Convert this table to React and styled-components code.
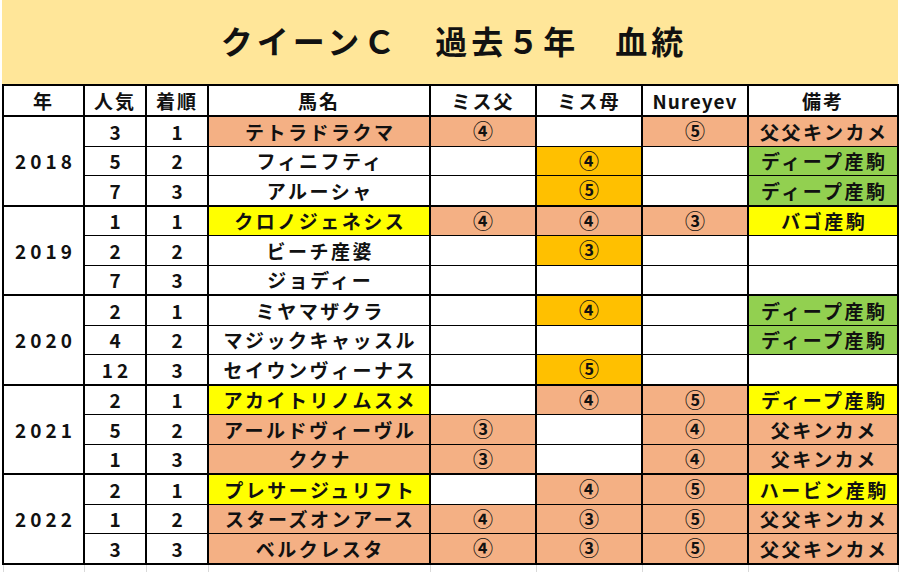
import React from "react";
import styled, { createGlobalStyle } from "styled-components";

const GlobalStyle = createGlobalStyle`
  html, body { margin: 0; padding: 0; background: #ffffff; }
  body { font-family: "Noto Sans CJK JP", "Noto Sans", sans-serif; }
`;

const FILLS = {
  white: "#ffffff",
  salmon: "#F4B084",
  orange: "#FFC000",
  green: "#92D050",
  yellow: "#FFFF00",
};

const Sheet = styled.div`
  width: 902px;
  height: 572px;
  overflow: hidden;
  box-sizing: border-box;
  padding: 0 2px 0 2px;
  background: #ffffff;
`;

const TitleBand = styled.div`
  height: 84px;
  width: 896px;
  background: #FFE699;
  display: flex;
  align-items: center;
  justify-content: center;
  font-size: 32px;
  font-weight: 700;
  letter-spacing: 4px;
  color: #111;
  padding: 0 0 5px 8px;
  box-sizing: border-box;
`;

const Table = styled.table`
  border-collapse: collapse;
  table-layout: fixed;
  width: 897px;
  color: #111;
  font-weight: 700;
  font-size: 19px;
`;

const HeadCell = styled.th`
  height: 29px;
  padding: 0;
  border: 2px solid #000;
  background: #ffffff;
  text-align: center;
  font-weight: 700;
  letter-spacing: ${(p) => (p.$latin ? "1px" : "2px")};
  line-height: 1;
`;

const Cell = styled.td`
  height: 28.5px;
  padding: 0;
  text-align: center;
  vertical-align: middle;
  line-height: 1;
  white-space: nowrap;
  background: ${(p) => FILLS[p.$fill || "white"]};
  border-left: 2px solid #000;
  border-right: 2px solid #000;
  border-top: ${(p) => (p.$groupTop ? "2px" : "1px")} solid #000;
  border-bottom: ${(p) => (p.$groupEnd ? "2px" : "1px")} solid #000;
  letter-spacing: ${(p) => (p.$digits ? "4px" : "2.5px")};
  padding-left: ${(p) => (p.$digits ? "4px" : "2.5px")};
  font-size: ${(p) => (p.$mark ? "20px" : "19px")};
`;

const GridRow = styled.tr`
  height: 8px;
`;

const GridCell = styled.td`
  padding: 0;
  border-left: 1px solid #d9d9d9;
  border-right: 1px solid #d9d9d9;
`;

const COLS = [81, 62, 62, 222, 106, 106, 106, 150];
const HEADERS = ["年", "人気", "着順", "馬名", "ミス父", "ミス母", "Nureyev", "備考"];

const S = "salmon", W = "white", O = "orange", G = "green", Y = "yellow";

const GROUPS = [
  {
    year: "2018",
    rows: [
      ["3", "1", ["テトラドラクマ", S], ["④", S], ["", W], ["⑤", S], ["父父キンカメ", S]],
      ["5", "2", ["フィニフティ", W], ["", W], ["④", O], ["", W], ["ディープ産駒", G]],
      ["7", "3", ["アルーシャ", W], ["", W], ["⑤", O], ["", W], ["ディープ産駒", G]],
    ],
  },
  {
    year: "2019",
    rows: [
      ["1", "1", ["クロノジェネシス", Y], ["④", S], ["④", S], ["③", S], ["バゴ産駒", Y]],
      ["2", "2", ["ビーチ産婆", W], ["", W], ["③", O], ["", W], ["", W]],
      ["7", "3", ["ジョディー", W], ["", W], ["", W], ["", W], ["", W]],
    ],
  },
  {
    year: "2020",
    rows: [
      ["2", "1", ["ミヤマザクラ", W], ["", W], ["④", O], ["", W], ["ディープ産駒", G]],
      ["4", "2", ["マジックキャッスル", W], ["", W], ["", W], ["", W], ["ディープ産駒", G]],
      ["12", "3", ["セイウンヴィーナス", W], ["", W], ["⑤", O], ["", W], ["", W]],
    ],
  },
  {
    year: "2021",
    rows: [
      ["2", "1", ["アカイトリノムスメ", Y], ["", W], ["④", S], ["⑤", S], ["ディープ産駒", Y]],
      ["5", "2", ["アールドヴィーヴル", S], ["③", S], ["", W], ["④", S], ["父キンカメ", S]],
      ["1", "3", ["ククナ", S], ["③", S], ["", W], ["④", S], ["父キンカメ", S]],
    ],
  },
  {
    year: "2022",
    rows: [
      ["2", "1", ["プレサージュリフト", Y], ["", W], ["④", S], ["⑤", S], ["ハービン産駒", Y]],
      ["1", "2", ["スターズオンアース", S], ["④", S], ["③", S], ["⑤", S], ["父父キンカメ", S]],
      ["3", "3", ["ベルクレスタ", S], ["④", S], ["③", S], ["⑤", S], ["父父キンカメ", S]],
    ],
  },
];

const isMark = (t) => /^[①-⑳]$/.test(t);

export default function App() {
  return (
    <>
      <GlobalStyle />
      <Sheet>
        <TitleBand>クイーンＣ　過去５年　血統</TitleBand>
        <Table>
          <colgroup>
            {COLS.map((w, i) => (
              <col key={i} style={{ width: w }} />
            ))}
          </colgroup>
          <thead>
            <tr>
              {HEADERS.map((h) => (
                <HeadCell key={h} $latin={h === "Nureyev"}>
                  {h}
                </HeadCell>
              ))}
            </tr>
          </thead>
          <tbody>
            {GROUPS.map((g, gi) =>
              g.rows.map((r, ri) => {
                const top = ri === 0;
                const end = ri === g.rows.length - 1;
                return (
                  <tr key={`${gi}-${ri}`}>
                    {top && (
                      <Cell rowSpan={3} $groupTop $groupEnd $digits>
                        {g.year}
                      </Cell>
                    )}
                    <Cell $groupTop={top} $groupEnd={end} $digits>
                      {r[0]}
                    </Cell>
                    <Cell $groupTop={top} $groupEnd={end} $digits>
                      {r[1]}
                    </Cell>
                    {r.slice(2).map(([text, fill], ci) => (
                      <Cell
                        key={ci}
                        $fill={fill}
                        $groupTop={top}
                        $groupEnd={end}
                        $mark={isMark(text)}
                      >
                        {text}
                      </Cell>
                    ))}
                  </tr>
                );
              })
            )}
            <GridRow>
              {COLS.map((w, i) => (
                <GridCell key={i} />
              ))}
            </GridRow>
          </tbody>
        </Table>
      </Sheet>
    </>
  );
}
